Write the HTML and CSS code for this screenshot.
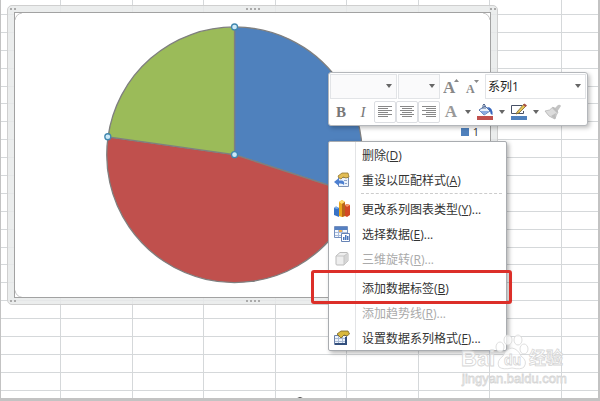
FILE: index.html
```html
<!DOCTYPE html>
<html lang="zh-CN">
<head>
    <meta charset="UTF-8">
    <meta name="viewport" content="width=device-width, initial-scale=1.0">
    <title>系列1</title>
    <link rel="stylesheet" href="styles.css">
</head>
<body>
    <main class="sheet">
        <table class="grid" aria-hidden="true">
            <colgroup>
                <col class="col-first"><col><col><col><col><col><col><col><col class="col-last">
            </colgroup>
            <tbody id="grid-body"></tbody>
        </table>

        <section class="chart">
            <div class="plot">
                <svg class="pie" viewBox="0 0 476 285" role="img" aria-label="饼图">
                    <g stroke="#7f7f7f" stroke-width="1.3" stroke-linejoin="round">
                        <path fill="#4f81bd" d="M220 142V14A128 128 0 0 1 341.700 181.600Z"/>
                        <path fill="#c0504d" d="M220 142L341.700 181.600A128 128 0 0 1 93.200 124.200Z"/>
                        <path fill="#9bbb59" d="M220 142L93.200 124.200A128 128 0 0 1 220 14Z"/>
                    </g>
                    <g fill="#cdeaf8" stroke="#4187ae" stroke-width="1.3">
                        <circle cx="220" cy="14" r="3"/>
                        <circle cx="220" cy="142" r="3"/>
                        <circle cx="93" cy="124" r="3"/>
                    </g>
                    <g fill="none" stroke="#c4c4c4">
                        <path d="M0 7Q1 1 7 0M469 0Q475 1 476 7M0 278Q1 284 7 285M469 285Q475 284 476 278"/>
                    </g>
                </svg>
                <div class="legend"><i class="swatch"></i>1</div>
            </div>
            <i class="grip grip-top"></i>
            <i class="grip grip-bottom"></i>
            <i class="corner top-left"></i>
            <i class="corner top-right"></i>
            <i class="corner bottom-left"></i>
            <i class="corner bottom-right"></i>
        </section>

        <i class="sheet-handle"></i>

        <div class="toolbar">
            <div class="tool-row">
                <div class="combo combo-font"><select aria-label="字体"><option></option></select></div>
                <div class="combo combo-size"><select aria-label="字号"><option></option></select></div>
                <button class="tool grow" aria-label="增大字号">
                    <svg width="18" height="20" viewBox="0 0 18 20"><text x="0" y="17" font-size="17">A</text><path d="M11 6L13.500 3L16 6Z"/></svg>
                </button>
                <button class="tool shrink" aria-label="减小字号">
                    <svg width="18" height="20" viewBox="0 0 18 20"><text x="1" y="17" font-size="12">A</text><path d="M9 4L11.500 7L14 4Z"/></svg>
                </button>
                <div class="combo combo-series"><select aria-label="图表元素"><option>系列1</option></select></div>
            </div>
            <div class="tool-row">
                <button class="tool letter bold">B</button>
                <button class="tool letter italic">I</button>
                <button class="tool align" aria-label="左对齐">
                    <svg width="16" height="14" viewBox="0 0 16 14"><path d="M1 1.500H15M1 3.500H11M1 5.500H15M1 7.500H11M1 9.500H15M1 11.500H11"/></svg>
                </button>
                <button class="tool align" aria-label="居中">
                    <svg width="16" height="14" viewBox="0 0 16 14"><path d="M1 1.500H15M3 3.500H13M1 5.500H15M3 7.500H13M1 9.500H15M3 11.500H13"/></svg>
                </button>
                <button class="tool align" aria-label="右对齐">
                    <svg width="16" height="14" viewBox="0 0 16 14"><path d="M1 1.500H15M5 3.500H15M1 5.500H15M5 7.500H15M1 9.500H15M5 11.500H15"/></svg>
                </button>
                <button class="tool letter color">A</button>
                <button class="tool drop" aria-label="字体颜色"></button>
                <button class="tool paint" aria-label="形状填充">
                    <svg width="18" height="18" viewBox="0 0 18 18">
                        <path fill="#c0504d" d="M1 13H17V17H1Z"/>
                        <path fill="#e8f0fb" stroke="#5375ad" d="M3 7L9 3L14 8L8 12Z"/>
                        <path fill="#8aabe0" d="M4 8L13 8L8 12Z"/>
                        <path fill="none" stroke="#53688f" d="M7 6V2Q8 0 9 2V6"/>
                        <path fill="#3565bd" d="M11 4Q17 4 16.500 12Q14 11 14 8Z"/>
                    </svg>
                </button>
                <button class="tool drop" aria-label="填充颜色"></button>
                <button class="tool paint" aria-label="形状轮廓">
                    <svg width="18" height="18" viewBox="0 0 18 18">
                        <path fill="#4f81bd" d="M1 13H17V17H1Z"/>
                        <path fill="#fff" stroke="#475166" d="M12 2.500H1.500V10.500H13.500V8"/>
                        <path fill="#e7c653" stroke="#796536" stroke-width=".8" d="M7 9L14 1L16 3L9 10L6 11Z"/>
                        <path fill="#a84e46" d="M13 2L14.500 0.500L17 2.500L15.500 4Z"/>
                    </svg>
                </button>
                <button class="tool drop" aria-label="轮廓颜色"></button>
                <button class="tool paint" aria-label="格式刷">
                    <svg width="18" height="18" viewBox="0 0 18 18">
                        <path fill="#c4c4c4" d="M10 6L14 2Q16 1 17 3L13 9Z"/>
                        <path fill="#dcdcdc" stroke="#b5b5b5" stroke-width=".8" d="M1 8Q6 8 9 4L14 9Q12 12 11 16Q4 14 1 8Z"/>
                        <path fill="#bdbdbd" d="M8 5L10 4L14 8L13 10ZM7 13L12 10L11 16Z"/>
                    </svg>
                </button>
            </div>
        </div>

        <div class="menu" role="menu">
            <button class="menu-item" role="menuitem"><span class="icon"></span><span>删除(<u>D</u>)</span></button>
            <button class="menu-item" role="menuitem">
                <span class="icon"><svg width="16" height="16" viewBox="0 0 16 16">
                    <path fill="#edf3fb" stroke="#7e92b5" d="M4.500 5.500H14.500V14.500H4.500Z"/>
                    <path fill="#e2bd55" stroke="#92762e" stroke-width=".8" d="M4 4L8 1H14L15 5L12 6L9 5L7 7L5 6Z"/>
                    <path fill="#4c7fd0" d="M0 10L5 6V8.500H8Q11 9 10 13Q9 11 5 11.500V14Z"/>
                    <path stroke="#8ea5c9" d="M10 8.500H13M11 11.500H13"/>
                </svg></span>
                <span>重设以匹配样式(<u>A</u>)</span>
            </button>
            <hr>
            <button class="menu-item" role="menuitem">
                <span class="icon"><svg width="16" height="18" viewBox="0 0 16 18">
                    <path fill="#3973c6" d="M0 8L2 6.500L5 8V17L0 15Z"/><path fill="#7daee8" d="M0 8L2 6.500L5 8L3 9Z"/>
                    <path fill="#e8a31b" d="M5 2L8 0L11 2V16L8 17L5 16Z"/><path fill="#ffdc6d" d="M5 2L8 0L11 2L8 4Z"/>
                    <path fill="#b7661b" d="M8 4L11 2V16L8 17Z"/>
                    <path fill="#d34724" d="M11 5L13 4L16 5V15L13 17L11 16Z"/><path fill="#f69a6b" d="M11 5L13 4L16 5L13 7Z"/>
                </svg></span>
                <span>更改系列图表类型(<u>Y</u>)...</span>
            </button>
            <button class="menu-item" role="menuitem">
                <span class="icon"><svg width="16" height="16" viewBox="0 0 16 16">
                    <path fill="#f4f8fd" stroke="#7590bf" d="M.5.500H13.500V11.500H.5Z"/>
                    <path fill="#5580c1" d="M1 1H13V4H1Z"/>
                    <path stroke="#a9bbdb" d="M1 6.500H13M1 9.500H13M4.500 4V11M8.500 4V11"/>
                    <path fill="#f0b250" d="M5 4H8V6H5Z"/>
                    <path fill="#fff" stroke="#6783b5" d="M7.500 7.500H15.500V15.500H7.500Z"/>
                    <path fill="#4775bd" d="M9 11H10.500V14H9ZM11 9H12.500V14H11ZM13 10H14.500V14H13Z"/>
                </svg></span>
                <span>选择数据(<u>E</u>)...</span>
            </button>
            <button class="menu-item" role="menuitem" disabled>
                <span class="icon"><svg width="16" height="16" viewBox="0 0 16 16">
                    <path fill="#eee" stroke="#bbb" stroke-linejoin="round" d="M2 5L6 1.500H13Q14 2 14 3V10L10 14H3Q2 14 2 13Z"/>
                    <path fill="#d5d5d5" d="M10 5L14 2V10L10 14Z"/><path fill="none" stroke="#c5c5c5" d="M2 5H10V14M10 5L14 2"/>
                </svg></span>
                <span>三维旋转(<u>R</u>)...</span>
            </button>
            <hr>
            <button class="menu-item marked" role="menuitem"><span class="icon"></span><span>添加数据标签(<u>B</u>)</span></button>
            <button class="menu-item" role="menuitem" disabled><span class="icon"></span><span>添加趋势线(<u>R</u>)...</span></button>
            <button class="menu-item" role="menuitem">
                <span class="icon"><svg width="16" height="16" viewBox="0 0 16 16">
                    <path fill="#edf3fb" stroke="#6b7fa6" d="M.5 5.500H12.500V14.500H.5Z"/>
                    <path fill="#334f7d" d="M1 13H13V15H1ZM11 7H13V15H11Z"/>
                    <path stroke="#a9bad4" d="M1 8.500H11M1 11.500H11M4.500 6V13M8.500 6V13"/>
                    <path fill="#d8b83e" stroke="#776325" stroke-width=".8" d="M3 4L7 1H14L15.500 4L13 6L10 5L7 8L5 6Z"/>
                </svg></span>
                <span>设置数据系列格式(<u>F</u>)...</span>
            </button>
        </div>

        <svg class="watermark" width="112" height="54" viewBox="0 0 112 54" aria-hidden="true">
            <g fill="#fff" fill-opacity=".7" stroke="#d6d6d6" stroke-width=".8">
                <text x="3" y="33" font-size="22" font-weight="bold">Bai</text>
                <ellipse cx="42" cy="14" rx="4" ry="5"/>
                <ellipse cx="50" cy="7" rx="4" ry="5"/>
                <ellipse cx="60" cy="7" rx="4" ry="5"/>
                <ellipse cx="66" cy="16" rx="4" ry="5"/>
                <path d="M54 15Q60 16 63 23Q70 28 66 34Q63 37 54 35Q45 37 41 34Q38 28 45 23Q48 16 54 15Z"/>
                <text x="46" y="32" font-size="14" font-weight="bold">du</text>
                <text x="71" y="31" font-size="17" font-weight="bold">经验</text>
                <text x="4" y="50" font-size="13">jingyan.baidu.com</text>
            </g>
        </svg>
    </main>

    <script>
        const ROWS = 23;
        const COLUMNS = 9;
        const body = document.getElementById('grid-body');

        for (let i = 0; i < ROWS; i++) {
            const row = body.insertRow();
            for (let j = 0; j < COLUMNS; j++) {
                row.insertCell();
            }
        }
    </script>
</body>
</html>
```
FILE: styles.css
```css
* {
    box-sizing: border-box;
}
body {
    margin: 0;
    font-family: "Open Sans", "Noto Sans CJK SC", sans-serif;
    font-size: 12px;
    color: #333;
}
.sheet {
    position: relative;
    height: 100vh;
    overflow: hidden;
    background-color: #fff;
    border: solid #c3c3c3;
    border-width: 0 2px 3px 1px;
}
.grid {
    width: 100%;
    height: 100%;
    table-layout: fixed;
    border-collapse: separate;
    border-spacing: 0;
}
.col-first {
    width: 60px;
}
.col-last {
    width: 36px;
}
.grid td {
    padding: 0;
    border-right: 1px solid #d5d8da;
    border-bottom: 1px solid #d5d8da;
}
.grid td:last-child {
    border-right: none;
}
.grid tr:first-child td {
    height: 15px;
}
.grid tr:last-child td {
    height: 7px;
    border-bottom: none;
}

/* Chart object floating over the cells */
.chart {
    position: absolute;
    left: 6px;
    top: 5px;
    width: 491px;
    padding: 7px;
    background-color: rgba(232, 234, 234, 0.85);
    border: 1px solid #cfcfcf;
    border-radius: 5px;
}
.plot {
    position: relative;
    background-color: #fff;
    outline: 1px solid #a2a2a2;
}
.pie {
    display: block;
    width: 100%;
}
.legend {
    position: absolute;
    right: 11px;
    top: 111px;
    display: flex;
    align-items: center;
    gap: 4px;
    font-size: 11px;
    line-height: 16px;
}
.swatch {
    width: 8px;
    height: 8px;
    background-color: #4f81bd;
}
.grip,
.corner {
    position: absolute;
    height: 2px;
    background: repeating-linear-gradient(90deg, #aaa 0 2px, transparent 2px 4px);
}
.grip {
    left: calc(50% - 7px);
    width: 14px;
}
.grip-top {
    top: 2px;
}
.grip-bottom {
    bottom: 2px;
}
.corner {
    width: 6px;
}
.top-left {
    top: 2px;
    left: 2px;
}
.top-right {
    top: 2px;
    right: 1px;
}
.bottom-left {
    bottom: 2px;
    left: 2px;
}
.bottom-right {
    bottom: 2px;
    right: 1px;
}
.sheet-handle {
    position: absolute;
    left: calc(50% - 4px);
    bottom: -7px;
    width: 8px;
    height: 8px;
    background-color: #fff;
    border: 1px solid #444;
    border-radius: 50%;
}

/* Mini toolbar */
.toolbar {
    position: absolute;
    left: 327px;
    top: 72px;
    width: 260px;
    padding: 0 1px;
    background-color: #fff;
    border: 1px solid #b4b7bb;
    border-radius: 3px;
    box-shadow: 2px 2px 4px rgba(0, 0, 0, 0.25);
}
.tool-row {
    display: flex;
    align-items: center;
    height: 26px;
}
button {
    padding: 0;
    border: none;
    background: none;
    font: inherit;
    color: inherit;
}
.combo {
    display: grid;
    align-items: center;
    height: 25px;
    margin-right: 1px;
    background-color: #fafafb;
    border: 1px solid #e2e4e7;
}
.combo select,
.combo::after {
    grid-area: 1 / 1;
}
.combo select {
    appearance: none;
    width: 100%;
    height: 100%;
    padding: 0 2px;
    border: none;
    background: none;
    font: inherit;
    color: #222;
}
.combo::after,
.drop::after {
    content: "";
    border: 3px solid transparent;
    border-top: 4px solid #666;
    border-bottom: none;
    pointer-events: none;
}
.combo::after {
    justify-self: end;
    margin-right: 4px;
}
.combo-font {
    width: 67px;
}
.combo-size {
    width: 42px;
}
.combo-series {
    flex: 1;
    margin-right: 0;
    background-color: #fff;
}
.tool {
    display: flex;
    align-items: center;
    justify-content: center;
    width: 22px;
    height: 22px;
    color: #777;
}
.tool text {
    font-family: "Liberation Serif", serif;
    font-weight: bold;
    fill: #888;
}
.grow path,
.shrink path {
    fill: #888;
}
.letter {
    font-family: "Liberation Serif", serif;
    font-size: 15px;
}
.bold,
.color {
    font-weight: bold;
}
.color {
    color: #999;
    font-size: 17px;
}
.italic {
    font-style: italic;
}
.align {
    border: 1px solid #dcdee2;
    border-radius: 2px;
}
.align path {
    stroke: #888;
}
.drop {
    width: 12px;
}
.paint {
    width: 22px;
}

/* Context menu */
.menu {
    position: absolute;
    left: 327px;
    top: 141px;
    width: 179px;
    background: linear-gradient(#e3e4e6, #e3e4e6) 26px 0 / 1px 100% no-repeat #fff;
    border: 1px solid #a9acb0;
    border-radius: 2px;
    box-shadow: 2px 2px 4px rgba(0, 0, 0, 0.3);
}
.menu-item {
    position: relative;
    display: flex;
    align-items: center;
    gap: 7px;
    width: 100%;
    height: 25px;
    text-align: left;
    white-space: nowrap;
}
.menu-item:disabled {
    color: #aaa;
}
.icon {
    display: flex;
    justify-content: center;
    width: 26px;
}
.menu u {
    text-underline-offset: 1px;
}
.menu hr {
    height: 1px;
    margin: 1px 4px 2px 32px;
    border: none;
    border-top: 1px dashed #ccc;
}
.marked::after {
    content: "";
    position: absolute;
    inset: -5px -6px -4px -18px;
    border: 3px solid #dc2f29;
    border-radius: 3px;
    z-index: 1;
}
.watermark {
    position: absolute;
    right: 28px;
    bottom: 11px;
    font-family: "Liberation Sans", "Noto Sans CJK SC", sans-serif;
}
```
